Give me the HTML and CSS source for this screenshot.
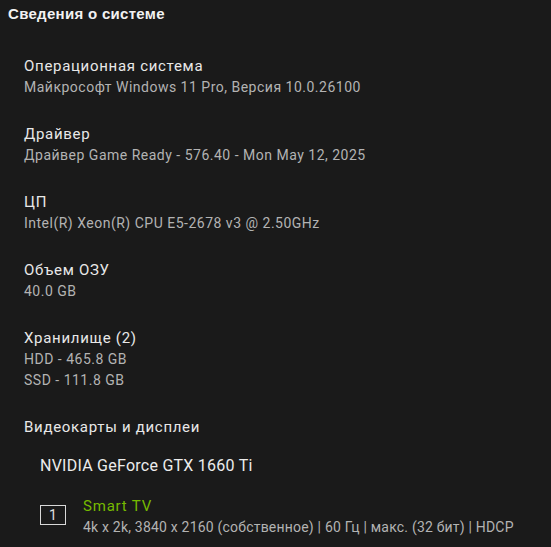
FILE: index.html
```html
<!DOCTYPE html>
<html lang="ru">
<head>
    <meta charset="UTF-8">
    <meta name="viewport" content="width=device-width, initial-scale=1.0">
    <title>Сведения о системе</title>
    <link rel="stylesheet" href="styles.css">
</head>
<body>
    <div class="panel">
        <h1 class="title">Сведения о системе</h1>

        <div class="info">
            <div class="group">
                <div class="label">Операционная система</div>
                <div class="value">Майкрософт Windows 11 Pro, Версия 10.0.26100</div>
            </div>
            <div class="group">
                <div class="label">Драйвер</div>
                <div class="value">Драйвер Game Ready - 576.40 - Mon May 12, 2025</div>
            </div>
            <div class="group">
                <div class="label">ЦП</div>
                <div class="value">Intel(R) Xeon(R) CPU E5-2678 v3 @ 2.50GHz</div>
            </div>
            <div class="group">
                <div class="label">Объем ОЗУ</div>
                <div class="value">40.0 GB</div>
            </div>
            <div class="group">
                <div class="label">Хранилище (2)</div>
                <div class="value">HDD - 465.8 GB</div>
                <div class="value">SSD - 111.8 GB</div>
            </div>
            <div class="group">
                <div class="label">Видеокарты и дисплеи</div>
                <div class="gpu">
                    <div class="gpu-name">NVIDIA GeForce GTX 1660 Ti</div>
                    <div class="display">
                        <div class="display-num">1</div>
                        <div class="display-info">
                            <div class="display-name">Smart TV</div>
                            <div class="value">4k x 2k, 3840 x 2160 (собственное) | 60 Гц | макс. (32 бит) | HDCP</div>
                        </div>
                    </div>
                </div>
            </div>
        </div>
    </div>
</body>
</html>
```

FILE: styles.css
```css
body {
    margin: 0;
    background-color: #1a1a1a;
    font-family: Roboto, "Liberation Sans", sans-serif;
    color: #e8e8e8;
    height: 547px;
    overflow: hidden;
}

.panel {
    padding: 4px 8px 0 8px;
}

.title {
    margin: 0;
    font-family: "Liberation Sans", Arial, sans-serif;
    font-size: 15px;
    font-weight: bold;
    line-height: 20px;
    letter-spacing: 0.3px;
    color: #f2f2f2;
}

.info {
    padding: 32px 0 0 16px;
    display: flex;
    flex-direction: column;
    gap: 26px;
}

.label {
    font-size: 15px;
    line-height: 21px;
    letter-spacing: 0.7px;
    color: #e8e8e8;
}

.value {
    font-size: 14px;
    line-height: 21px;
    letter-spacing: 0.5px;
    color: #b3b3b3;
}

.gpu {
    padding: 17px 0 0 16px;
}

.gpu-name {
    font-size: 16px;
    line-height: 21px;
    letter-spacing: 0.25px;
    color: #ececec;
}

.display {
    display: flex;
    align-items: flex-start;
    gap: 17px;
    margin-top: 20px;
}

.display-num {
    width: 24px;
    height: 18px;
    margin-top: 9px;
    border: 1px solid #d8d8d8;
    text-align: center;
    font-size: 14px;
    line-height: 18px;
    color: #e0e0e0;
}

.display-name {
    font-size: 15px;
    line-height: 21px;
    letter-spacing: 0.8px;
    color: #76b900;
}

.display-info .value {
    letter-spacing: 0.2px;
}
```
